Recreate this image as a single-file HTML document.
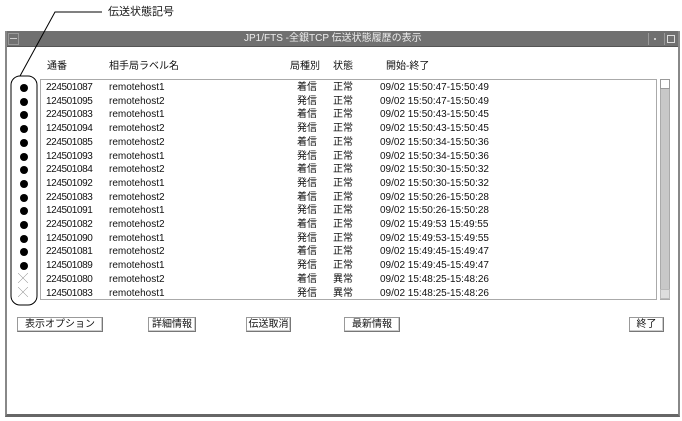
<!DOCTYPE html>
<html><head><meta charset="utf-8"><style>
*{margin:0;padding:0;box-sizing:border-box}
body{width:682px;height:421px;background:#fff;position:relative;overflow:hidden;font-family:"Liberation Sans","Noto Sans CJK JP",sans-serif;font-size:10px;color:#111}
.a{position:absolute;white-space:nowrap;line-height:12px}
.d{position:absolute;left:20px;width:8px;height:8px;border-radius:50%;background:#000}
.btn{position:absolute;height:15px;border:1px solid #999;border-right-color:#777;border-bottom-color:#777;background:#fff;font-size:10px;line-height:13px;text-align:center;box-shadow:inset -1px -1px 0 #ccc}
.r{position:absolute;left:0;width:682px;height:13px}
.r .n{position:absolute;left:46px;letter-spacing:-0.4px}
.r .h{position:absolute;left:109px}
.r .k{position:absolute;left:297px}
.r .s{position:absolute;left:333px}
.r .t{position:absolute;left:380px}
.r div{white-space:nowrap;line-height:12px;top:0}
</style></head><body>
<div style="position:absolute;left:5px;top:31px;width:675px;height:386px;border:2px solid #888;border-bottom-width:3px;border-bottom-color:#666"></div>
<div style="position:absolute;left:7px;top:31px;width:671px;height:16px;background:#707070;border-bottom:1px solid #555"></div>
<div style="position:absolute;left:8px;top:33px;width:11px;height:12px;border:1px solid #999"></div>
<div style="position:absolute;left:10px;top:38px;width:7px;height:1px;background:#ccc"></div>
<div style="position:absolute;left:648px;top:33px;width:14px;height:12px;border-left:1px solid #999"></div>
<div style="position:absolute;left:654px;top:38px;width:2px;height:2px;background:#ccc"></div>
<div style="position:absolute;left:664px;top:33px;width:12px;height:12px;border-left:1px solid #999"></div>
<div style="position:absolute;left:667px;top:35px;width:8px;height:8px;border:1px solid #ddd"></div>
<div class="a" style="left:244px;top:33px;color:#eee">JP1/FTS -全銀TCP 伝送状態履歴の表示</div>
<div class="a" style="left:108px;top:6px;font-size:11px">伝送状態記号</div>
<svg style="position:absolute;left:0;top:0" width="110" height="310">
<polyline points="102,12 55,12 20,76" fill="none" stroke="#000" stroke-width="1"/>
<rect x="11" y="76" width="26" height="229" rx="9" ry="9" fill="none" stroke="#000" stroke-width="1"/>
</svg>
<div class="a" style="left:47px;top:61px">通番</div>
<div class="a" style="left:109px;top:61px">相手局ラベル名</div>
<div class="a" style="left:290px;top:61px">局種別</div>
<div class="a" style="left:333px;top:61px">状態</div>
<div class="a" style="left:386px;top:61px">開始-終了</div>
<div style="position:absolute;left:40px;top:79px;width:617px;height:221px;border:1px solid #aaa"></div>
<div style="position:absolute;left:660px;top:79px;width:10px;height:221px;background:#c8c8c8;border:1px solid #aaa"></div>
<div style="position:absolute;left:660px;top:79px;width:10px;height:10px;background:#fff;border:1px solid #999"></div>
<div style="position:absolute;left:660px;top:289px;width:10px;height:10px;background:#ddd;border:1px solid #bbb"></div>

<div class="r" style="top:82px"><div class="d" style="top:2px"></div><div class="n">224501087</div><div class="h">remotehost1</div><div class="k">着信</div><div class="s">正常</div><div class="t">09/02 15:50:47-15:50:49</div></div>
<div class="r" style="top:95.7px"><div class="d" style="top:2px"></div><div class="n">124501095</div><div class="h">remotehost2</div><div class="k">発信</div><div class="s">正常</div><div class="t">09/02 15:50:47-15:50:49</div></div>
<div class="r" style="top:109.4px"><div class="d" style="top:2px"></div><div class="n">224501083</div><div class="h">remotehost1</div><div class="k">着信</div><div class="s">正常</div><div class="t">09/02 15:50:43-15:50:45</div></div>
<div class="r" style="top:123.1px"><div class="d" style="top:2px"></div><div class="n">124501094</div><div class="h">remotehost2</div><div class="k">発信</div><div class="s">正常</div><div class="t">09/02 15:50:43-15:50:45</div></div>
<div class="r" style="top:136.8px"><div class="d" style="top:2px"></div><div class="n">224501085</div><div class="h">remotehost2</div><div class="k">着信</div><div class="s">正常</div><div class="t">09/02 15:50:34-15:50:36</div></div>
<div class="r" style="top:150.5px"><div class="d" style="top:2px"></div><div class="n">124501093</div><div class="h">remotehost1</div><div class="k">発信</div><div class="s">正常</div><div class="t">09/02 15:50:34-15:50:36</div></div>
<div class="r" style="top:164.2px"><div class="d" style="top:2px"></div><div class="n">224501084</div><div class="h">remotehost2</div><div class="k">着信</div><div class="s">正常</div><div class="t">09/02 15:50:30-15:50:32</div></div>
<div class="r" style="top:177.9px"><div class="d" style="top:2px"></div><div class="n">124501092</div><div class="h">remotehost1</div><div class="k">発信</div><div class="s">正常</div><div class="t">09/02 15:50:30-15:50:32</div></div>
<div class="r" style="top:191.6px"><div class="d" style="top:2px"></div><div class="n">224501083</div><div class="h">remotehost2</div><div class="k">着信</div><div class="s">正常</div><div class="t">09/02 15:50:26-15:50:28</div></div>
<div class="r" style="top:205.3px"><div class="d" style="top:2px"></div><div class="n">124501091</div><div class="h">remotehost1</div><div class="k">発信</div><div class="s">正常</div><div class="t">09/02 15:50:26-15:50:28</div></div>
<div class="r" style="top:219px"><div class="d" style="top:2px"></div><div class="n">224501082</div><div class="h">remotehost2</div><div class="k">着信</div><div class="s">正常</div><div class="t">09/02 15:49:53 15:49:55</div></div>
<div class="r" style="top:232.7px"><div class="d" style="top:2px"></div><div class="n">124501090</div><div class="h">remotehost1</div><div class="k">発信</div><div class="s">正常</div><div class="t">09/02 15:49:53-15:49:55</div></div>
<div class="r" style="top:246.4px"><div class="d" style="top:2px"></div><div class="n">224501081</div><div class="h">remotehost2</div><div class="k">着信</div><div class="s">正常</div><div class="t">09/02 15:49:45-15:49:47</div></div>
<div class="r" style="top:260.1px"><div class="d" style="top:2px"></div><div class="n">124501089</div><div class="h">remotehost1</div><div class="k">発信</div><div class="s">正常</div><div class="t">09/02 15:49:45-15:49:47</div></div>
<div class="r" style="top:273.8px"><div style="position:absolute;left:18px;color:#777">╳</div><div class="n">224501080</div><div class="h">remotehost2</div><div class="k">着信</div><div class="s">異常</div><div class="t">09/02 15:48:25-15:48:26</div></div>
<div class="r" style="top:287.5px"><div style="position:absolute;left:18px;color:#777">╳</div><div class="n">124501083</div><div class="h">remotehost1</div><div class="k">発信</div><div class="s">異常</div><div class="t">09/02 15:48:25-15:48:26</div></div>

<div class="btn" style="left:17px;top:317px;width:86px">表示オプション</div>
<div class="btn" style="left:148px;top:317px;width:48px">詳細情報</div>
<div class="btn" style="left:246px;top:317px;width:45px">伝送取消</div>
<div class="btn" style="left:344px;top:317px;width:56px">最新情報</div>
<div class="btn" style="left:629px;top:317px;width:35px">終了</div>
</body></html>
